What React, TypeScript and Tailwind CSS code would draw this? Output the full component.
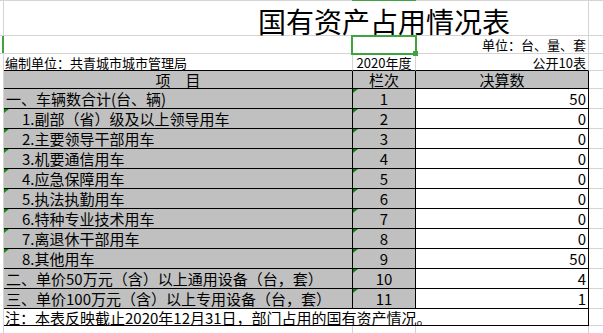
const rows = [
  { label: '一、车辆数合计(台、辆)', sub: false, no: 1, val: 50 },
  { label: '1.副部（省）级及以上领导用车', sub: true, no: 2, val: 0 },
  { label: '2.主要领导干部用车', sub: true, no: 3, val: 0 },
  { label: '3.机要通信用车', sub: true, no: 4, val: 0 },
  { label: '4.应急保障用车', sub: true, no: 5, val: 0 },
  { label: '5.执法执勤用车', sub: true, no: 6, val: 0 },
  { label: '6.特种专业技术用车', sub: true, no: 7, val: 0 },
  { label: '7.离退休干部用车', sub: true, no: 8, val: 0 },
  { label: '8.其他用车', sub: true, no: 9, val: 50 },
  { label: '二、单价50万元（含）以上通用设备（台，套）', sub: false, no: 10, val: 4 },
  { label: '三、单价100万元（含）以上专用设备（台，套）', sub: false, no: 11, val: 1 },
];

function Mark() {
  return (
    <span className="absolute left-0 top-0 h-0 w-0 border-t-[4px] border-r-[5px] border-t-[#0a8a0a] border-r-transparent" />
  );
}

function Gutter() {
  return (
    <>
      <div className="w-[3px] shrink-0" />
      <div className="w-px shrink-0 bg-[#d4d4d4]" />
    </>
  );
}

export default function App() {
  return (
    <div className="h-[333px] w-[603px] overflow-hidden bg-white text-black font-['Noto_Sans_CJK_SC',sans-serif]">
      {/* column header edge */}
      <div className="flex h-px">
        <div className="w-[352px] bg-[#d4d4d4]" />
        <div className="w-[64px] bg-[#3fa33f]" />
        <div className="flex-1 bg-[#d4d4d4]" />
      </div>

      {/* title row */}
      <div className="flex h-[35px] border-b border-[#d4d4d4]">
        <Gutter />
        <div className="flex w-[585px] shrink-0 items-end border-r border-[#d4d4d4] pl-[254px] text-[28px] leading-[28px]">
          国有资产占用情况表
        </div>
        <div className="flex-1" />
      </div>

      {/* unit row */}
      <div className="flex h-[18px] border-b border-[#d4d4d4] text-[13px]">
        <div className="w-[2px] shrink-0" />
        <div className="w-[2px] shrink-0 bg-[#3fa33f]" />
        <div className="w-[349px] shrink-0" />
        <div className="relative w-[63px] shrink-0">
          <div className="absolute left-[-2px] top-[-1px] z-10 h-[20px] w-[66px] border-2 border-[#3fa33f]" />
          <div className="absolute left-[60px] top-[15px] z-10 h-[5px] w-[5px] bg-[#3fa33f]" />
        </div>
        <div className="flex w-[173px] shrink-0 items-center justify-end border-r border-[#d4d4d4] pr-[2px] leading-none">
          单位：台、量、套
        </div>
        <div className="flex-1" />
      </div>

      {/* info row */}
      <div className="flex h-[17px] text-[13px] leading-none">
        <Gutter />
        <div className="flex w-[349px] shrink-0 items-center border-r border-b border-r-[#d4d4d4] border-b-black pl-[1px]">
          编制单位：共青城市城市管理局
        </div>
        <div className="flex w-[63px] shrink-0 items-center justify-center border-r border-b border-r-[#d4d4d4] border-b-black">
          2020年度
        </div>
        <div className="flex w-[173px] shrink-0 items-center justify-end border-r border-b border-r-[#d4d4d4] border-b-black pr-[2px]">
          公开10表
        </div>
        <div className="flex-1 border-b border-[#d4d4d4]" />
      </div>

      {/* header */}
      <div className="flex h-[18px] text-[15px] leading-none">
        <Gutter />
        <div className="flex w-[349px] shrink-0 items-center justify-center border-r border-b border-black bg-[#c0c0c0]">
          项　目
        </div>
        <div className="flex w-[63px] shrink-0 items-center justify-center border-r border-b border-black bg-[#c0c0c0]">
          栏次
        </div>
        <div className="flex w-[173px] shrink-0 items-center justify-center border-r border-b border-black bg-[#c0c0c0]">
          决算数
        </div>
        <div className="flex-1 border-b border-[#d4d4d4]" />
      </div>

      {rows.map((r) => (
        <div key={r.no} className="flex h-[20px] text-[15px] leading-none">
          <Gutter />
          <div
            className={`relative flex w-[349px] shrink-0 items-center overflow-hidden whitespace-nowrap border-r border-b border-black bg-[#c0c0c0] ${
              r.sub ? 'pl-[18px]' : 'pl-[2px]'
            }`}
          >
            {r.sub && <Mark />}
            {r.label}
          </div>
          <div className="relative flex w-[63px] shrink-0 items-center justify-center border-r border-b border-black bg-[#c0c0c0]">
            <Mark />
            {r.no}
          </div>
          <div className="flex w-[173px] shrink-0 items-center justify-end border-r border-b border-black pr-[2px]">
            {r.val}
          </div>
          <div className="flex-1 border-b border-[#d4d4d4]" />
        </div>
      ))}

      {/* note */}
      <div className="flex h-[17px] text-[15px] leading-none">
        <Gutter />
        <div className="flex w-[585px] shrink-0 items-center border-r border-b border-black pl-[1px]">
          注：本表反映截止2020年12月31日，部门占用的国有资产情况。
        </div>
        <div className="flex-1 border-b border-[#d4d4d4]" />
      </div>

      {/* empty grid below */}
      <div className="flex h-[20px]">
        <Gutter />
        <div className="w-[349px] shrink-0 border-r border-[#d4d4d4]" />
        <div className="w-[63px] shrink-0 border-r border-[#d4d4d4]" />
        <div className="w-[173px] shrink-0 border-r border-[#d4d4d4]" />
        <div className="flex-1" />
      </div>
    </div>
  );
}
